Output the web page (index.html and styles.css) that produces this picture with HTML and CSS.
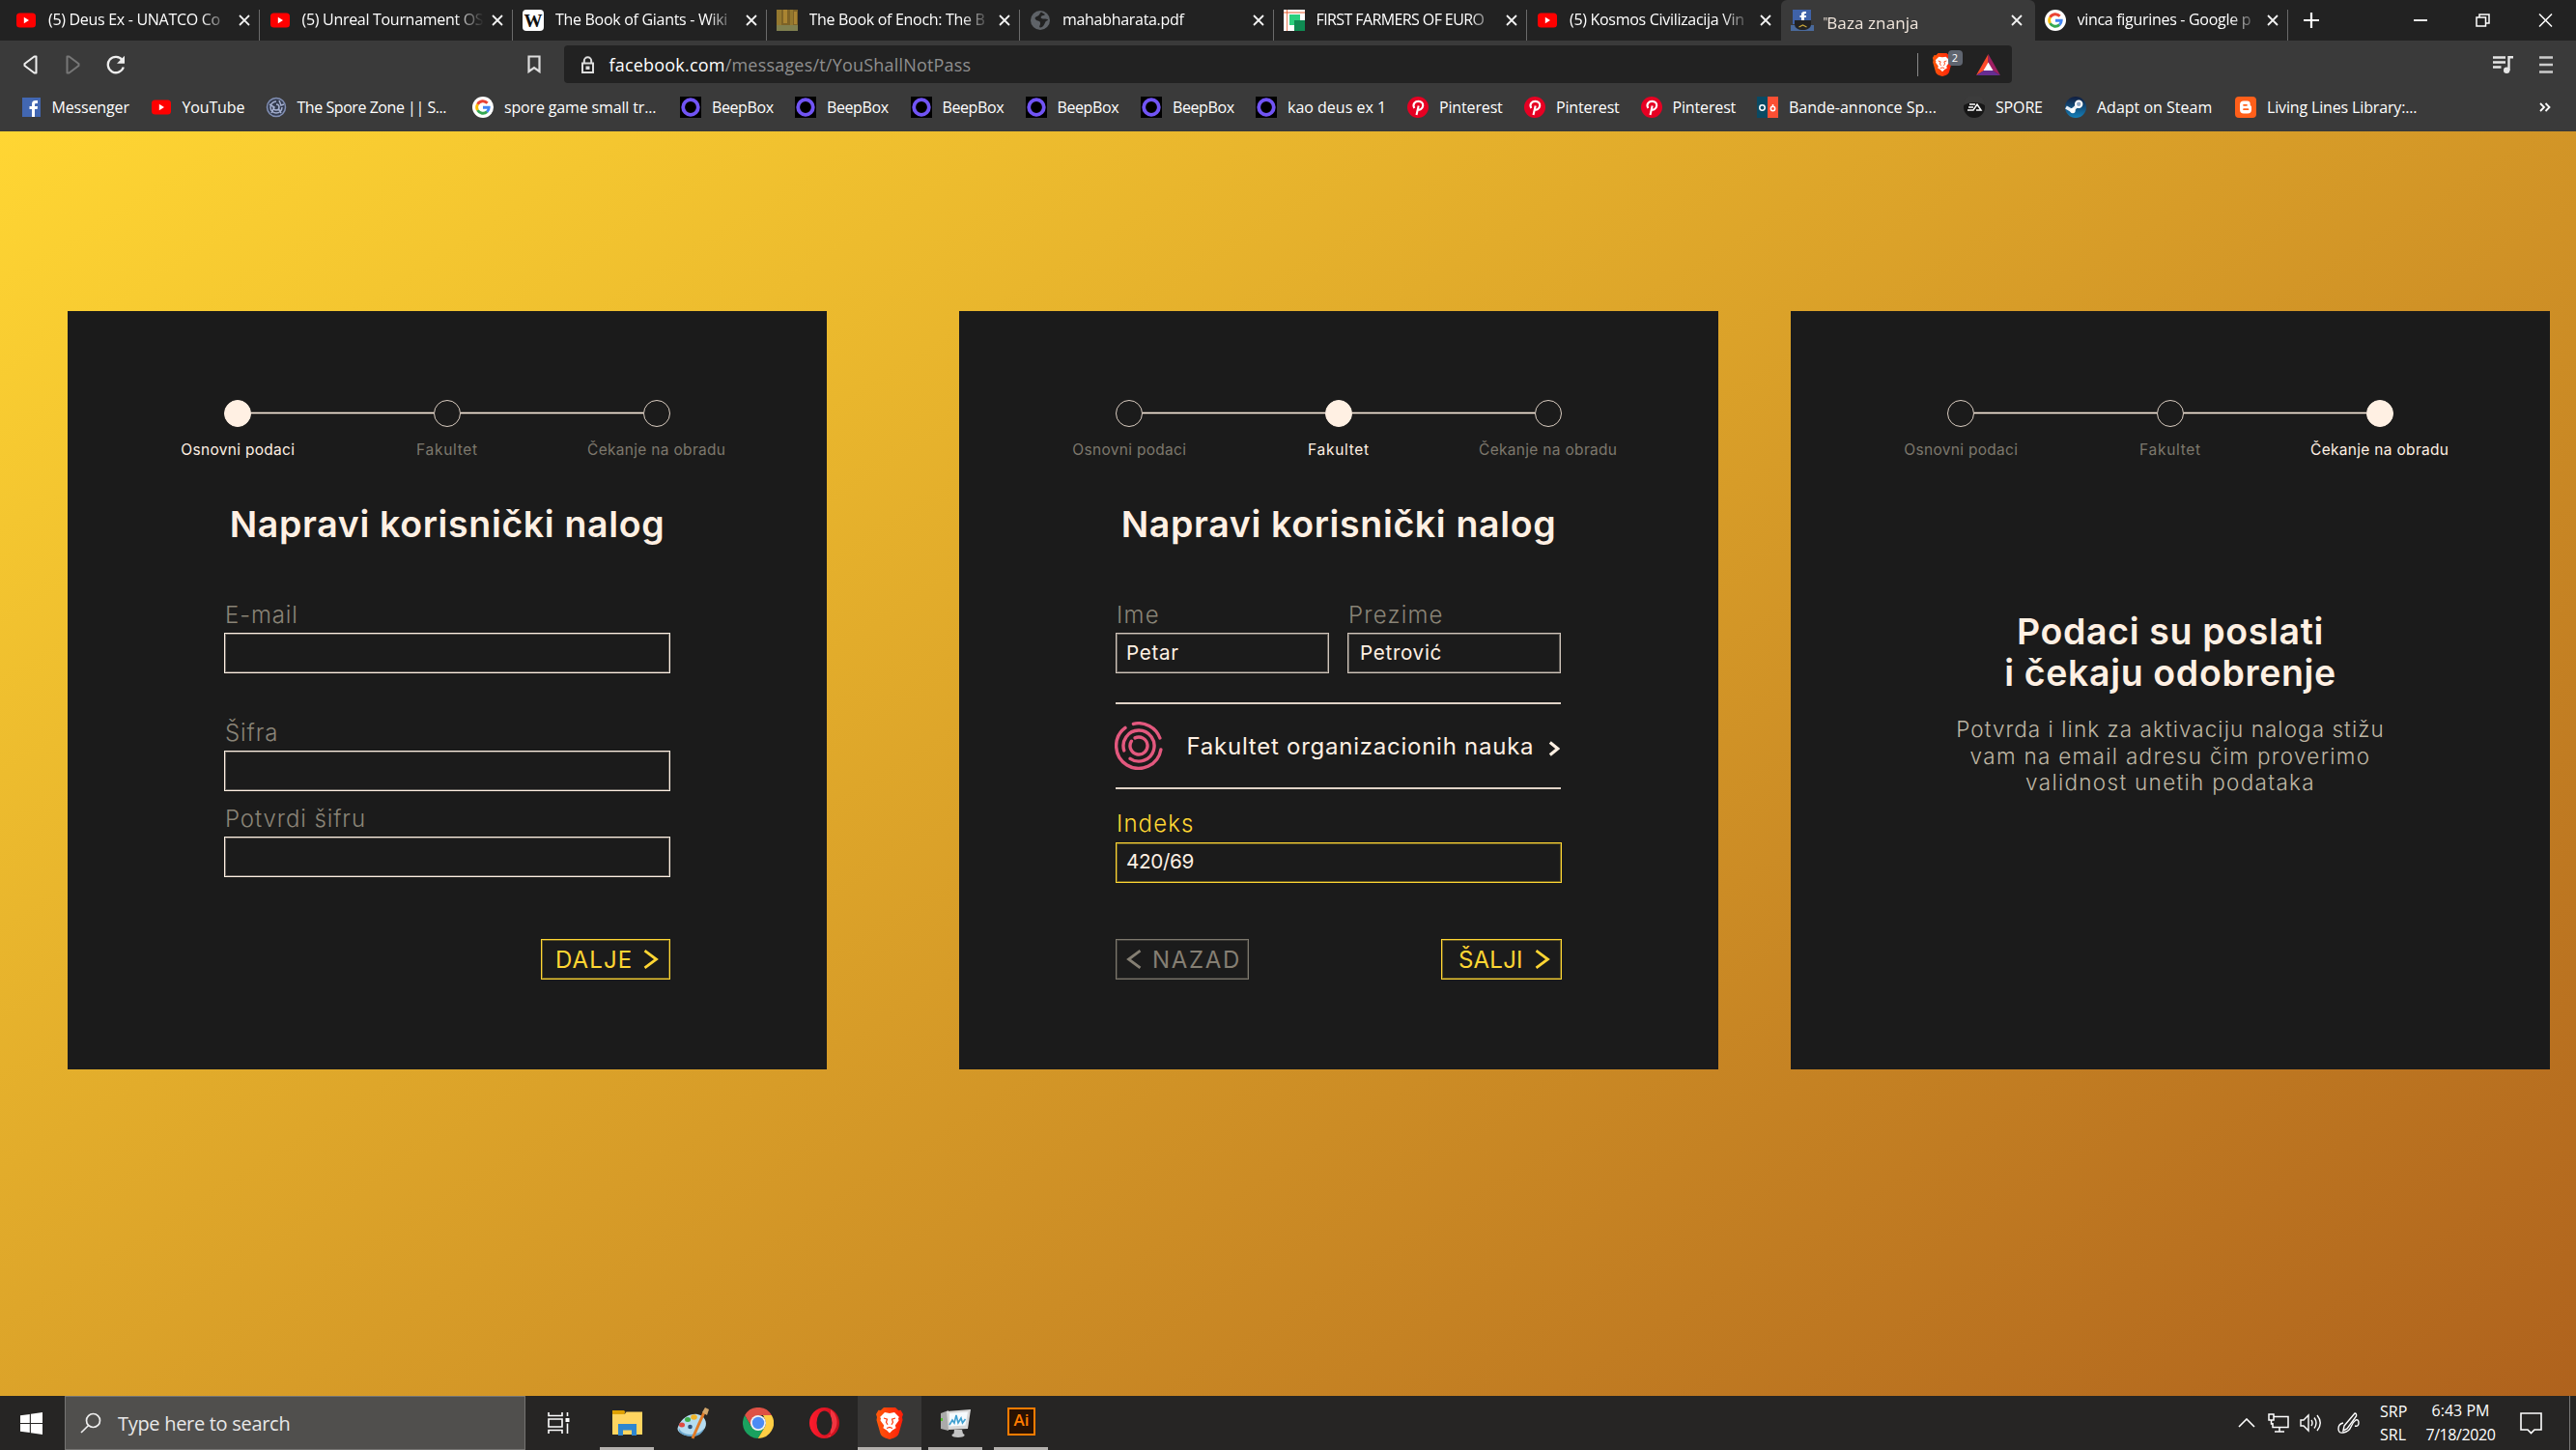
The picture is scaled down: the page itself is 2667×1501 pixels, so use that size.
FILE: index.html
```html
<!DOCTYPE html>
<html lang="sr">
<head>
<meta charset="utf-8">
<title>Baza znanja</title>
<link rel="stylesheet" href="styles.css">
</head>
<body>

<svg class="defs" aria-hidden="true">
  <symbol id="i-yt" viewBox="0 0 22 22"><rect x="1" y="3.500" width="20" height="15" rx="3.500" fill="#f00"/><path d="M8.800 7.800v6.400l5.200-3.200z" fill="#fff"/></symbol>
  <symbol id="i-wiki" viewBox="0 0 22 22"><rect width="22" height="22" rx="4" fill="#fff"/><text x="11" y="17.500" text-anchor="middle" class="glyph-serif">W</text></symbol>
  <symbol id="i-book" viewBox="0 0 22 22"><path fill="#7d6226" d="M0 0h22v22H0z"/><path fill="#94782f" d="M0 0h5v22H0zM14 0h3v22h-3z"/><path fill="#a98432" d="M7 0h4v14H7zM18 2h3v13h-3z"/><path fill="#80804f" d="M0 16h22v6H0z"/></symbol>
  <symbol id="i-globe" viewBox="0 0 22 22"><circle cx="11" cy="11" r="10" fill="#5f6368"/><path d="M12 2.500c-2 1-1 3-3.500 4s-4 2-2 4 4 .5 4.500 3-2 4.500 0 5 4-2.500 5-5 3-2 3-3-3-1-5-1-3-1-2-2.500 3-.5 4-2z" fill="#222"/></symbol>
  <symbol id="i-farm" viewBox="0 0 22 22"><path fill="#fff" d="M0 0h22v22H0z"/><path fill="#e35b2c" d="M0 2.500h22v1H0zM3 0h.8v22H3z"/><path fill="#2bcf7d" d="M6 5h11v11H6z"/><path fill="#0f8a52" d="M11 11h11v11H11z"/></symbol>
  <symbol id="i-g" viewBox="0 0 22 22"><circle cx="11" cy="11" r="11" fill="#fff"/><g fill="none" stroke-width="2.900"><path d="M15.600 6.800A6.300 6.300 0 0 0 5.500 7.900" stroke="#ea4335"/><path d="M5.500 7.900a6.300 6.300 0 0 0 0 6.200" stroke="#fbbc05"/><path d="M5.500 14.100a6.300 6.300 0 0 0 9.700 1.600" stroke="#34a853"/><path d="M15.200 15.700A6.300 6.300 0 0 0 17.200 11.200H11" stroke="#4285f4"/></g></symbol>
  <symbol id="i-fb" viewBox="0 0 22 22"><path fill="#4267b2" d="M2 1h19v20H2z"/><path fill="#fff" d="M12 21v-8H9.500v-3H12V7.800C12 5 13.500 4 16 4h2v3h-1.500c-1 0-1.500.4-1.500 1.400V10h3l-.4 3H15v8z"/></symbol>
  <symbol id="i-fbm" viewBox="0 0 24 22"><path fill="#3f62a8" d="M2 0h19v15H2z"/><path fill="#fff" d="M11 11V8H9.500V6H11V4.500C11 2.500 12.500 2 16 2v2c-2 0-2 .5-2 2h2v2h-2v3z"/><path fill="#4a6a9c" d="M0 16h24v6H0z"/><path fill="#222" d="M4 11h17v4c0 4-4 6-8.500 6S4 19 4 15z"/><path d="M8.500 18l4-2 4 2" fill="none" stroke="#c9a83b" stroke-width="1.300"/></symbol>
  <symbol id="i-spore" viewBox="0 0 22 22"><circle cx="11" cy="11" r="9.500" fill="#343c50" stroke="#8290b5" stroke-width="1.500"/><path d="M11 5a6 6 0 1 0 6 6M11 8a3 3 0 1 1-3 3M14 4l2 5 3-1M4 8l5 3-3 6M13 12l3 5" fill="none" stroke="#a5b0cf" stroke-width="1.500"/></symbol>
  <symbol id="i-beep" viewBox="0 0 22 22"><path fill="#000" d="M0 0h22v22H0z"/><circle cx="11" cy="11" r="7.800" fill="none" stroke="#7154f5" stroke-width="3.800"/></symbol>
  <symbol id="i-pin" viewBox="0 0 22 22"><circle cx="11" cy="11" r="11" fill="#e60023"/><path d="M9.500 19l2.200-9.500M7.300 12C4.800 7.500 8.500 4.900 11.500 4.900c3.200 0 5 2.100 4.700 4.600-.4 3.200-3.800 5.300-5.700 3.200" fill="none" stroke="#fff" stroke-width="2.100"/></symbol>
  <symbol id="i-bande" viewBox="0 0 22 22"><path fill="#0a4a63" d="M0 0h11v22H0z"/><path fill="#fb4f33" d="M11 0h11v22H11z"/><g fill="none" stroke="#fff" stroke-width="1.500"><circle cx="5.500" cy="11.500" r="2.700"/><circle cx="16.500" cy="12.500" r="2.200"/><path d="M16.500 8v2.500"/></g></symbol>
  <symbol id="i-ea" viewBox="0 0 22 22"><circle cx="11" cy="11" r="11" fill="#171717"/><path d="M0 9a11 11 0 0 1 22 0c-6-4-16-4-22 0z" fill="#3c3c3c"/><path d="M6 8h6M5 11h5M4 14h6l4-6 4 6h-5" fill="none" stroke="#fff" stroke-width="1.500"/></symbol>
  <symbol id="i-steam" viewBox="0 0 22 22"><linearGradient id="g-steam" x2="0" y2="1"><stop offset="0" stop-color="#111d3f"/><stop offset="1" stop-color="#1480ba"/></linearGradient><circle cx="11" cy="11" r="11" fill="url(#g-steam)"/><path d="M1 11l6 3.500L13 9" stroke="#e8eef5" stroke-width="3.500" fill="none"/><circle cx="14.200" cy="7.800" r="3.200" fill="#8ea6c4" stroke="#fff" stroke-width="2"/><circle cx="8" cy="14.500" r="2.700" fill="#fff"/></symbol>
  <symbol id="i-blog" viewBox="0 0 22 22"><rect width="22" height="22" rx="4" fill="#ff5f1a"/><path d="M9 4.500h3.500a3.200 3.200 0 0 1 3.200 3.200v1c0 .8 1.300.8 1.300 1.800v3A4 4 0 0 1 13 17.500H9A4 4 0 0 1 5 13.500v-5a4 4 0 0 1 4-4z" fill="#fff"/><path d="M9 8.800h3M9 13.200h4.500" stroke="#ff5f1a" stroke-width="1.700" stroke-linecap="round"/></symbol>
  <symbol id="i-x" viewBox="0 0 12 12"><path d="M1 1l10 10M11 1L1 11" stroke="currentColor" stroke-width="1.800" fill="none"/></symbol>
  <symbol id="i-brave" viewBox="0 0 28 33"><linearGradient id="g-brave" x2="1" y2="0"><stop offset="0" stop-color="#ff5a0a"/><stop offset="1" stop-color="#ff1d0a"/></linearGradient><path fill="url(#g-brave)" d="M8 0h12l3.200 3 2.300-.3L28 7l-1 3 .5 3-4 14c-.6 2-3 3.500-5 4.600L14 33l-4.500-1.400c-2-1.100-4.400-2.600-5-4.600L.5 13 1 10 0 7l2.500-4.300 2.300.3z"/><path fill="#fff" d="M9 5l5 1 5-1 5 5-1 1 .5 2.500-3.700 5 .8 2.700L17 23.500 14 26.500l-3-3-3.600-2.300.8-2.700-3.700-5L5 11l-1-1z"/><path fill="none" stroke="#ff3a0a" stroke-width="1.200" d="M8 11l3.500 1.200-1 3 1.500 2.600M20 11l-3.500 1.200 1 3-1.500 2.600M11 21.500l3-1 3 1"/></symbol>
  <symbol id="i-next" viewBox="0 0 16 20"><path d="M1.500 1.200L13.500 10 1.500 18.800" fill="none" stroke="currentColor" stroke-width="2.800"/></symbol>
</svg>

<header class="browser">
  <nav class="tabs">
    <div class="tab"><svg class="fav"><use href="#i-yt"/></svg><span class="tab-title">(5) Deus Ex - UNATCO Co</span><svg class="close"><use href="#i-x"/></svg></div>
    <div class="tab"><svg class="fav"><use href="#i-yt"/></svg><span class="tab-title">(5) Unreal Tournament OS</span><svg class="close"><use href="#i-x"/></svg></div>
    <div class="tab"><svg class="fav"><use href="#i-wiki"/></svg><span class="tab-title">The Book of Giants - Wiki</span><svg class="close"><use href="#i-x"/></svg></div>
    <div class="tab"><svg class="fav"><use href="#i-book"/></svg><span class="tab-title">The Book of Enoch: The B</span><svg class="close"><use href="#i-x"/></svg></div>
    <div class="tab"><svg class="fav"><use href="#i-globe"/></svg><span class="tab-title">mahabharata.pdf</span><svg class="close"><use href="#i-x"/></svg></div>
    <div class="tab"><svg class="fav"><use href="#i-farm"/></svg><span class="tab-title tight">FIRST FARMERS OF EURO</span><svg class="close"><use href="#i-x"/></svg></div>
    <div class="tab plain"><svg class="fav"><use href="#i-yt"/></svg><span class="tab-title">(5) Kosmos Civilizacija Vin</span><svg class="close"><use href="#i-x"/></svg></div>
    <div class="tab active"><svg class="fav"><use href="#i-fbm"/></svg><span class="tab-title"><span class="tick">"</span>Baza znanja</span><svg class="close"><use href="#i-x"/></svg></div>
    <div class="tab"><svg class="fav"><use href="#i-g"/></svg><span class="tab-title">vinca figurines - Google p</span><svg class="close"><use href="#i-x"/></svg></div>
    <svg class="new-tab" viewBox="0 0 16 16"><path d="M8 0v16M0 8h16" stroke="#fff" stroke-width="2.200"/></svg>
    <div class="window-controls">
      <svg width="14" height="14" viewBox="0 0 14 14"><path d="M0 7h14" stroke="#fff" stroke-width="1.800"/></svg>
      <svg width="15" height="14" viewBox="0 0 15 14"><path d="M1 4h9.500v9H1zM4 4V1h10v9h-3" fill="none" stroke="#fff" stroke-width="1.500"/></svg>
      <svg width="15" height="14" viewBox="0 0 15 14"><path d="M1 .5l13 13M14 .5l-13 13" stroke="#fff" stroke-width="1.500"/></svg>
    </div>
  </nav>

  <div class="toolbar">
    <svg class="back" viewBox="0 0 15 20"><path d="M13.500 1.500v17h-2L1.500 11V9l10-7.500z" fill="none" stroke="#eee" stroke-width="2" stroke-linejoin="round"/></svg>
    <svg class="forward" viewBox="0 0 15 20"><path d="M1.500 1.500v17h2L13.500 11V9l-10-7.500z" fill="none" stroke="#777" stroke-width="2" stroke-linejoin="round"/></svg>
    <svg class="reload" viewBox="0 0 20 20"><path d="M16.500 5A8.200 8.200 0 1 0 17.800 12.500" fill="none" stroke="#eee" stroke-width="2.300"/><path d="M19 .8v8h-8z" fill="#eee"/></svg>
    <svg class="bookmark" viewBox="0 0 14 19"><path d="M1.500 1.500h11v15.500L7 13l-5.500 4z" fill="none" stroke="#ddd" stroke-width="2.200"/></svg>
    <div class="url">
      <svg class="lock" viewBox="0 0 15 18"><path d="M3.800 8V5a3.700 3.700 0 0 1 7.400 0v3" fill="none" stroke="#ddd" stroke-width="2"/><path d="M2 7.500h11V17H2z" fill="none" stroke="#ddd" stroke-width="2"/><path d="M5.500 10.500h4v3.500h-4z" fill="#ddd"/></svg>
      <span class="url-text"><b>facebook.com</b>/messages/t/YouShallNotPass</span>
      <span class="shield"><svg class="shield-icon"><use href="#i-brave"/></svg><span class="badge">2</span></span>
      <svg class="bat" viewBox="0 0 25 22"><path fill="#ff4a2a" d="M12.500 0L0 22l8-5 4.500-8z"/><path fill="#9e1f63" d="M12.500 0L25 22l-8-5-4.500-8z"/><path fill="#662d91" d="M0 22h25l-8-5H8z"/><path fill="#fff" d="M12.500 8.500L17.500 17h-10z"/></svg>
    </div>
    <svg class="playlist" viewBox="0 0 21 18"><path d="M0 1.500h13M0 6.500h13M0 11.500h8.500" stroke="#e6e6e6" stroke-width="2.400"/><path d="M16.500 15V1.200H21" fill="none" stroke="#e6e6e6" stroke-width="2.400"/><circle cx="14.200" cy="14.700" r="3.200" fill="#e6e6e6"/></svg>
    <svg class="menu" viewBox="0 0 14 18"><path d="M0 1.500h14M0 9h14M0 16.500h14" stroke="#ccc" stroke-width="2.600"/></svg>
  </div>

  <div class="bookmarks">
    <a><svg><use href="#i-fb"/></svg>Messenger</a>
    <a><svg><use href="#i-yt"/></svg>YouTube</a>
    <a class="tightest"><svg><use href="#i-spore"/></svg>The Spore Zone || S...</a>
    <a><svg><use href="#i-g"/></svg>spore game small tr...</a>
    <a class="tight"><svg><use href="#i-beep"/></svg>BeepBox</a>
    <a class="tight"><svg><use href="#i-beep"/></svg>BeepBox</a>
    <a class="tight"><svg><use href="#i-beep"/></svg>BeepBox</a>
    <a class="tight"><svg><use href="#i-beep"/></svg>BeepBox</a>
    <a class="tight"><svg><use href="#i-beep"/></svg>BeepBox</a>
    <a class="loose"><svg><use href="#i-beep"/></svg>kao deus ex 1</a>
    <a><svg><use href="#i-pin"/></svg>Pinterest</a>
    <a><svg><use href="#i-pin"/></svg>Pinterest</a>
    <a><svg><use href="#i-pin"/></svg>Pinterest</a>
    <a class="loose"><svg><use href="#i-bande"/></svg>Bande-annonce Sp...</a>
    <a><svg><use href="#i-ea"/></svg>SPORE</a>
    <a class="loose"><svg><use href="#i-steam"/></svg>Adapt on Steam</a>
    <a><svg><use href="#i-blog"/></svg>Living Lines Library:...</a>
    <svg class="more" viewBox="0 0 12 10"><path d="M1 1l4 4-4 4M6.500 1l4 4-4 4" fill="none" stroke="#fff" stroke-width="1.800"/></svg>
  </div>
</header>

<main class="stage">
  <section class="card">
    <div class="stepper">
      <div class="track"><i class="dot on"></i><i class="line"></i><i class="dot"></i><i class="line"></i><i class="dot"></i></div>
      <div class="labels"><span class="on">Osnovni podaci</span><span class="wide">Fakultet</span><span>Čekanje na obradu</span></div>
    </div>
    <h1>Napravi korisnički nalog</h1>
    <form class="form">
      <label class="field">E-mail<input></label>
      <label class="field gap-l">Šifra<input></label>
      <label class="field gap-s">Potvrdi šifru<input></label>
      <div class="actions end">
        <button type="button" class="btn dalje"><span>DALJE</span><svg><use href="#i-next"/></svg></button>
      </div>
    </form>
  </section>

  <section class="card second">
    <div class="stepper">
      <div class="track"><i class="dot"></i><i class="line"></i><i class="dot on"></i><i class="line"></i><i class="dot"></i></div>
      <div class="labels"><span>Osnovni podaci</span><span class="on wide">Fakultet</span><span>Čekanje na obradu</span></div>
    </div>
    <h1>Napravi korisnički nalog</h1>
    <form class="form">
      <div class="pair">
        <label class="field soft">Ime<input value="Petar"></label>
        <label class="field soft">Prezime<input class="inset" value="Petrović"></label>
      </div>
      <div class="picker">
        <svg class="fon" viewBox="-25 -25 50 50"><g fill="none" stroke="#e3587e" stroke-width="3.400" stroke-linecap="round"><path d="M-5.600-22.600A23.300 23.300 0 0 1 21.900-8"/><path d="M22.900 4A23.300 23.300 0 1 1-14-18.600"/><path d="M-15.200 4.900A16 16 0 1 1-8.900 13.300"/><path d="M-3.900-8.100A9 9 0 1 1-7.600-4.800"/></g></svg>
        <span>Fakultet organizacionih nauka</span>
        <svg class="pick-arrow" viewBox="0 0 12 16"><path d="M1.800 1.500L9.800 8l-8 6.500" fill="none" stroke="#fff0e3" stroke-width="3.200"/></svg>
      </div>
      <label class="field active">Indeks<input class="digits" value="420/69"></label>
      <div class="actions split">
        <button type="button" class="btn nazad"><svg class="flip"><use href="#i-next"/></svg><span>NAZAD</span></button>
        <button type="button" class="btn salji"><span>ŠALJI</span><svg><use href="#i-next"/></svg></button>
      </div>
    </form>
  </section>

  <section class="card third">
    <div class="stepper">
      <div class="track"><i class="dot"></i><i class="line"></i><i class="dot"></i><i class="line"></i><i class="dot on"></i></div>
      <div class="labels"><span>Osnovni podaci</span><span class="wide">Fakultet</span><span class="on">Čekanje na obradu</span></div>
    </div>
    <div class="message">
      <h2>Podaci su poslati<br>i čekaju odobrenje</h2>
      <p><span class="first">Potvrda i link za aktivaciju naloga stižu</span><br>vam na email adresu čim proverimo<br>validnost unetih podataka</p>
    </div>
  </section>
</main>

<footer class="taskbar">
  <div class="start"><svg viewBox="0 0 23 23"><path fill="#fff" d="M0 3.200L9.800 1.900V11H0zM10.900 1.700L23 0v11H10.900zM0 12h9.800v9.100L0 19.800zM10.900 12H23v11l-12.100-1.700z"/></svg></div>
  <div class="search"><svg viewBox="0 0 22 22"><circle cx="13.500" cy="8.500" r="7" fill="none" stroke="#eee" stroke-width="1.700"/><path d="M8.700 13.500L1 21" stroke="#eee" stroke-width="1.700"/></svg>Type here to search</div>
  <div class="task view"><svg width="23" height="22" viewBox="0 0 23 22"><path d="M1 0v3.500h14V0M1 22v-3.500h14V22M1 7h14v8H1zM20.500 0v4M20.500 11.500V22" fill="none" stroke="#fff" stroke-width="1.600"/><path d="M18.500 6h4v4h-4z" fill="#fff"/></svg></div>
  <div class="task open"><svg width="31" height="27" viewBox="0 0 31 27"><path fill="#ffd560" d="M0 3.500h13L14.500 1.500H31V25H0z"/><path fill="#e0a100" d="M0 0h12l1.500 1.500L12 4H0z"/><path fill="#2f86cf" d="M6 14h19v12h-5v-5.500h-9V26H6z"/></svg></div>
  <div class="task"><svg width="34" height="34" viewBox="0 0 34 34"><path d="M2 21c-2 4 2 7 8 9 8 1.500 17-2 20-8 3-6-1-13-8-14S6 11 2 21z" fill="#b5dcf0"/><path d="M3 22c1 4 6 7 12 7s12-3 14-7c-1 6-7 9.500-14 9S1 27 3 22z" fill="#6aa6cc"/><ellipse cx="6" cy="19" rx="3" ry="2.500" fill="#e04a40"/><ellipse cx="12" cy="13.500" rx="3" ry="2.500" fill="#3fae49"/><ellipse cx="18.500" cy="11" rx="3.300" ry="2.800" fill="#f0b429"/><circle cx="14.500" cy="21" r="2.300" fill="#2c4f78"/><path d="M29 6L17 33" stroke="#e07b28" stroke-width="3"/><path d="M30 1l4 2-2 6-5-3z" fill="#d1a56a"/></svg></div>
  <div class="task"><svg width="32" height="32" viewBox="0 0 32 32"><path fill="#de5145" d="M2.100 8A16 16 0 0 1 29.900 8H16a8 8 0 0 0-7 4z"/><path fill="#de5145" d="M2.100 8L9 20l7-12z"/><path fill="#1aa15f" d="M2.100 8A16 16 0 0 0 15.800 32L22.900 20H9z"/><path fill="#ffce44" d="M29.900 8A16 16 0 0 1 15.800 32L22.900 20A8 8 0 0 0 22.900 12L21 8z"/><circle cx="16" cy="16" r="8" fill="#f1f1f1"/><circle cx="16" cy="16" r="6.200" fill="#4c8bf5"/></svg></div>
  <div class="task"><svg width="31" height="32" viewBox="0 0 31 32"><linearGradient id="g-op" x2="1" y2="0"><stop offset="0" stop-color="#ff1b2d"/><stop offset="1" stop-color="#c2101c"/></linearGradient><ellipse cx="15.500" cy="16" rx="15.500" ry="16" fill="url(#g-op)"/><path d="M12 31a15.500 16 0 0 0 10-29v28z" fill="#f23540"/><ellipse cx="15.500" cy="16" rx="8" ry="12.500" fill="#262524"/></svg></div>
  <div class="task open current"><svg width="28" height="33"><use href="#i-brave"/></svg></div>
  <div class="task open"><svg width="32" height="31" viewBox="0 0 32 31"><path fill="#aaa" d="M1 5l8-3v21l-8-2z"/><path fill="#d9d9d9" d="M7 3l25-2-3 20-20 1z"/><path fill="#f5fafd" d="M10 5l19-1.500-2.500 14L10 18.500z"/><path d="M10 17l3-5 2 3 2-8 2 8 3-5 1.500 5 3-4" fill="none" stroke="#3f9fd0" stroke-width="1.600"/><path fill="#c4c4c4" d="M15 22h8l1 4c3 1 2 4-5 4s-8-3-4.500-4z"/><path fill="#56c02b" d="M1 10h2v3H1z"/></svg></div>
  <div class="task open ai"><svg width="29" height="29" viewBox="0 0 29 29"><path d="M1 1h27v27H1z" fill="#281102" stroke="#ff7c00" stroke-width="2"/><text x="14.500" y="18.500" text-anchor="middle" class="glyph-ai">Ai</text></svg></div>
  <div class="tray">
    <svg class="t-up" viewBox="0 0 18 10"><path d="M1 9l8-8 8 8" fill="none" stroke="#fff" stroke-width="1.600"/></svg>
    <svg class="t-net" viewBox="0 0 22 20"><path d="M6 3.500h15v11H5V10M12 14.500V19M7 19h10M1 1h5v6H1zM3.500 7v4h2" fill="none" stroke="#fff" stroke-width="1.500"/></svg>
    <svg class="t-vol" viewBox="0 0 23 20"><path d="M1 7h3l5-5v16l-5-5H1z" fill="none" stroke="#fff" stroke-width="1.400"/><path d="M12 7q2 3 0 6M15 4.500q4 5.500 0 11M18 2q6.500 8 0 16" fill="none" stroke="#fff" stroke-width="1.400"/></svg>
    <svg class="t-pen" viewBox="0 0 23 23"><path d="M7 14L18 1q2 0 1.500 3L10 17l-4 2zM6 11q-5 1-5 6t5 4q6-1 8-6t5-7q3-1 3 3t-4 3" fill="none" stroke="#fff" stroke-width="1.400"/></svg>
    <div class="stack lang"><span>SRP</span><span>SRL</span></div>
    <div class="stack clock"><span>6:43 PM</span><span>7/18/2020</span></div>
    <svg class="t-note" viewBox="0 0 23 23"><path d="M1 1h21v17h-7l-3.500 3.500L8 18H1z" fill="none" stroke="#fff" stroke-width="1.600"/></svg>
    <i class="peek"></i>
  </div>
</footer>
</body>
</html>
```
FILE: styles.css
```css
* { box-sizing: border-box; }

body {
  margin: 0;
  width: 2667px;
  height: 1501px;
  display: flex;
  flex-direction: column;
  overflow: hidden;
  font-family: "Open Sans", "Noto Sans", sans-serif;
  color: #fff;
}

svg { display: block; flex: none; }
.defs { position: absolute; width: 0; height: 0; }
.glyph-serif { font: bold 19px "Liberation Serif", serif; fill: #111; }
.glyph-ai { font: 600 17px "Open Sans", sans-serif; fill: #ff7c00; }

/* Browser chrome */
.browser { flex: none; height: 136px; background: #3a3a3a; }

.tabs {
  display: flex;
  align-items: center;
  height: 42px;
  padding-left: 6px;
  background: #222;
}
.tab {
  display: flex;
  align-items: center;
  flex: none;
  width: 262.500px;
  height: 42px;
  padding-left: 10px;
}
.tab:not(.active):not(.plain) { background: linear-gradient(#6a6a6a, #6a6a6a) right bottom / 1px 32px no-repeat; }
.fav { width: 22px; height: 22px; }
.tab-title {
  width: 192px;
  margin-left: 12px;
  white-space: nowrap;
  font-size: 16px;
  line-height: 40px;
  height: 42px;
  letter-spacing: -0.300px;
  -webkit-mask-image: linear-gradient(90deg, #000 158px, transparent 188px);
  mask-image: linear-gradient(90deg, #000 158px, transparent 188px);
}
.tab-title.tight { letter-spacing: -0.600px; }
.close { width: 12px; height: 12px; margin-left: 4.500px; color: #f2f2f2; }
.tab.active { background: #3a3a3a; border-radius: 6px 6px 0 0; width: 263px; }
.active .fav { width: 24px; }
.active .tab-title { width: 190px; margin-left: 10px; font-size: 17px; letter-spacing: 0.100px; line-height: 45px; color: #f1e6dc; }
.tick { font-size: 12px; vertical-align: 3px; letter-spacing: -1px; }
.new-tab { width: 16px; height: 16px; margin-left: 16px; }
.window-controls { display: flex; align-items: center; gap: 50px; margin-left: auto; padding-right: 24px; }

.toolbar { display: flex; align-items: center; height: 49px; padding: 0 24px; }
.back, .forward { width: 15px; height: 20px; }
.forward { margin-left: 29px; }
.reload { width: 20px; height: 20px; margin-left: 27px; }
.bookmark { width: 14px; height: 19px; margin-left: 416px; }
.url {
  display: flex;
  align-items: center;
  width: 1499px;
  height: 39px;
  margin-left: 23.500px;
  padding: 0 12px 0 17px;
  border-radius: 4px;
  background: #222;
}
.lock { width: 15px; height: 18px; }
.url-text { margin-left: 15px; font-size: 18px; line-height: 38px; letter-spacing: 0.200px; color: #8f8f8f; }
.url-text b { font-weight: 400; color: #fff; }
.shield {
  position: relative;
  margin-left: auto;
  margin-right: 24px;
  padding-left: 14px;
  border-left: 1px solid #8a8a8a;
}
.shield-icon { width: 22px; height: 24px; }
.badge {
  position: absolute;
  left: 31px;
  top: -3px;
  width: 15px;
  height: 16px;
  border-radius: 4px;
  background: #5f6570;
  font-size: 11px;
  line-height: 15px;
  text-align: center;
}
.bat { width: 25px; height: 22px; }
.playlist { width: 21px; height: 18px; margin-left: auto; }
.menu { width: 14px; height: 18px; margin-left: 27px; }

.bookmarks {
  display: grid;
  grid-template-columns: 135px 119px 214.500px 215px 119px 119.500px 119px 119.500px 119px 157px 121px 120.500px 120.500px 214px 105px 176px 315px 12px;
  align-items: center;
  height: 40px;
  padding-left: 20.500px;
}
.bookmarks a {
  display: flex;
  align-items: center;
  gap: 11px;
  font-size: 16px;
  line-height: 20px;
  letter-spacing: -0.150px;
  white-space: nowrap;
}
.bookmarks a svg { width: 22px; height: 22px; }
.bookmarks .tight { letter-spacing: -0.400px; }
.bookmarks .tightest { letter-spacing: -0.450px; }
.bookmarks .loose { letter-spacing: 0; }
.more { width: 12px; height: 10px; }

/* Page */
.stage {
  flex: 1;
  display: flex;
  align-items: flex-start;
  padding: 186px 0 0 70px;
  background: linear-gradient(148deg, #ffd633, #af621d);
  font-family: Inter, "Open Sans", sans-serif;
  color: #fff0e3;
}
.card {
  flex: none;
  width: 786px;
  height: 785px;
  padding-top: 91.500px;
  background: #1b1b1b;
}
.card.second { margin-left: 137px; }
.card.third { margin-left: 75px; }

.track { display: flex; align-items: center; padding: 0 162.500px 0 162px; }
.dot { width: 28px; height: 28px; border: 1.500px solid #d9ccc0; border-radius: 50%; }
.dot.on { background: #fff0e3; border-color: #fff0e3; }
.line { flex: 1; height: 1px; background: #fff0e3; box-shadow: 0 1px #5b5650, 0 -1px #5b5650; }
.labels {
  display: grid;
  grid-template-columns: repeat(3, 216.700px);
  justify-content: center;
  margin-top: 14.500px;
  font-size: 15.500px;
  line-height: 20px;
  letter-spacing: 0.300px;
  text-align: center;
  color: #7d786d;
}
.labels .on { color: #fff0e3; }
.labels .wide { letter-spacing: 0.700px; }

h1, h2 {
  margin: 45px 0 0;
  font-size: 37.500px;
  font-weight: 600;
  line-height: 44px;
  letter-spacing: 0.650px;
  text-align: center;
}

.form { width: 462px; margin: 58px 0 0 162px; }
.field {
  display: block;
  font-size: 24px;
  font-weight: 300;
  line-height: 28px;
  letter-spacing: 0.900px;
  text-indent: 1px;
  color: #8a8477;
}
.field input {
  display: block;
  width: 100%;
  height: 42px;
  margin-top: 4px;
  padding: 0 9px 1px 10px;
  border: 1px solid #fff0e3;
  border-radius: 0;
  box-shadow: inset 0 0 0 1px rgba(255, 240, 227, 0.350);
  outline: 0;
  background: none;
  font: 400 20.700px Inter, sans-serif;
  letter-spacing: 0.650px;
  color: #fff0e3;
}
.field.soft { letter-spacing: 1.200px; }
.field.soft input { border-color: #cfc4b9; }
.field.gap-l { margin-top: 48px; }
.field.gap-s { margin-top: 15px; }
.field.active { margin-top: 21.500px; letter-spacing: 1.100px; color: #ffd633; }
.field.active input { margin-top: 5px; border-color: #ffd633; box-shadow: inset 0 0 0 1px rgba(255, 214, 51, 0.350); }
.field .inset { padding-left: 12px; }
.field .digits { letter-spacing: -0.350px; padding-bottom: 3px; }

.pair { display: grid; grid-template-columns: 221px 221px; gap: 19px; }
.picker {
  display: flex;
  align-items: center;
  width: 461px;
  height: 90px;
  margin-top: 30px;
  border: solid #e0d3c7;
  border-width: 2px 0;
  font-size: 24px;
  letter-spacing: 0.750px;
}
.fon { width: 50px; height: 50px; margin-left: -1.500px; }
.picker span { margin-left: 25px; white-space: nowrap; }
.pick-arrow { width: 12px; height: 16px; margin: 5px 1px 0 auto; }

.actions { display: flex; }
.actions.end { justify-content: flex-end; margin-top: 64px; }
.actions.split { justify-content: space-between; margin-top: 58.500px; }
.btn {
  display: flex;
  align-items: center;
  justify-content: space-between;
  height: 42px;
  padding: 0 11px 0 14px;
  border: 1px solid #ffd633;
  box-shadow: inset 0 0 0 1px rgba(255, 214, 51, 0.350);
  background: none;
  font: 400 24px/40px Inter, sans-serif;
  letter-spacing: 1.100px;
  color: #ffd633;
}
.btn span { padding-top: 2px; }
.btn svg { width: 16px; height: 20px; }
.btn .flip { transform: scaleX(-1); }
.dalje { width: 134px; }
.salji { width: 125px; padding-left: 17px; letter-spacing: 0.200px; }
.nazad {
  width: 138px;
  padding: 0 7px 0 10px;
  border-color: #7d786d;
  box-shadow: inset 0 0 0 1px rgba(125, 120, 109, 0.350);
  letter-spacing: 1.700px;
  color: #857f73;
}

.message { margin-top: 155.500px; text-align: center; }
.message h2 { margin: 0; line-height: 43.700px; }
.message p {
  margin: 22.500px 0 0;
  font-size: 22.500px;
  font-weight: 300;
  line-height: 27.400px;
  letter-spacing: 1.300px;
  color: #beb6a4;
}
.message .first { letter-spacing: 1.050px; }

/* Taskbar */
.taskbar { flex: none; display: flex; height: 56px; background: #262524; }
.start { display: flex; align-items: center; width: 67px; padding-left: 21px; }
.start svg { width: 23px; height: 23px; }
.search {
  display: flex;
  align-items: center;
  gap: 17px;
  width: 477px;
  padding-left: 15px;
  border: 1px solid #757472;
  background: #504f4d;
  font-size: 20px;
  letter-spacing: -0.300px;
  color: #e8e8e8;
}
.search svg { width: 22px; height: 22px; }
.task {
  display: flex;
  align-items: center;
  justify-content: center;
  width: 68px;
  border: solid transparent;
  border-width: 3px 6px;
}
.task.view { width: 71px; padding-right: 3px; }
.task.open {
  background-image: linear-gradient(#b3b0ad, #b3b0ad);
  background-position: bottom;
  background-repeat: no-repeat;
  background-origin: border-box;
  background-size: 56px 3px;
}
.task.current { background-color: #383736; background-size: 100% 3px; width: 66px; margin: 0 1px; }
.task.ai { padding-bottom: 3px; }
.tray { display: flex; align-items: center; margin-left: auto; }
.t-up { width: 18px; height: 10px; }
.t-net { width: 22px; height: 20px; margin-left: 13px; }
.t-vol { width: 23px; height: 20px; margin-left: 11px; }
.t-pen { width: 23px; height: 23px; margin-left: 16px; }
.stack { display: flex; flex-direction: column; font-size: 16px; line-height: 24px; }
.lang { margin-left: 21px; width: 28px; }
.clock { margin-left: 19px; width: 73px; letter-spacing: -0.400px; text-align: center; }
.clock span:first-child { letter-spacing: 0; margin-top: -2px; }
.clock span:last-child { margin-top: 1px; }
.t-note { width: 23px; height: 23px; margin-left: 25px; }
.peek { width: 1px; height: 56px; margin: 0 6px 0 28px; background: #7a7978; }
```
